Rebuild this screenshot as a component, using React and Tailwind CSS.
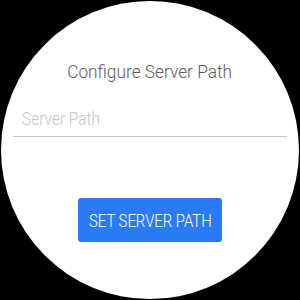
export default function App() {
  return (
    <div className="w-[300px] h-[300px] bg-black flex items-center justify-center" style={{ fontFamily: "Roboto, 'Noto Sans', sans-serif" }}>
      <div className="w-[298px] h-[298px] rounded-full bg-white flex flex-col items-center">
        <div className="mt-[59px] h-[24px] flex justify-center">
          <span className="inline-block whitespace-nowrap text-[19px] font-light text-[#5c5c5c] leading-[24px] scale-x-[0.91]">Configure Server Path</span>
        </div>
        <div className="mt-[24px] w-[274px] border-b border-[#c8c8c8] pb-[6px] pl-[9px] h-[29px]">
          <span className="inline-block whitespace-nowrap origin-left text-[18px] font-light text-[#c4c4c4] leading-[22px] scale-x-[0.86]">Server Path</span>
        </div>
        <button className="mt-[61px] w-[144px] h-[44px] rounded-[3px] bg-[#2a7cf6] flex items-center justify-center pt-[2px]">
          <span className="inline-block whitespace-nowrap text-white text-[18px] font-light leading-[22px] scale-x-[0.825]">SET SERVER PATH</span>
        </button>
      </div>
    </div>
  );
}
